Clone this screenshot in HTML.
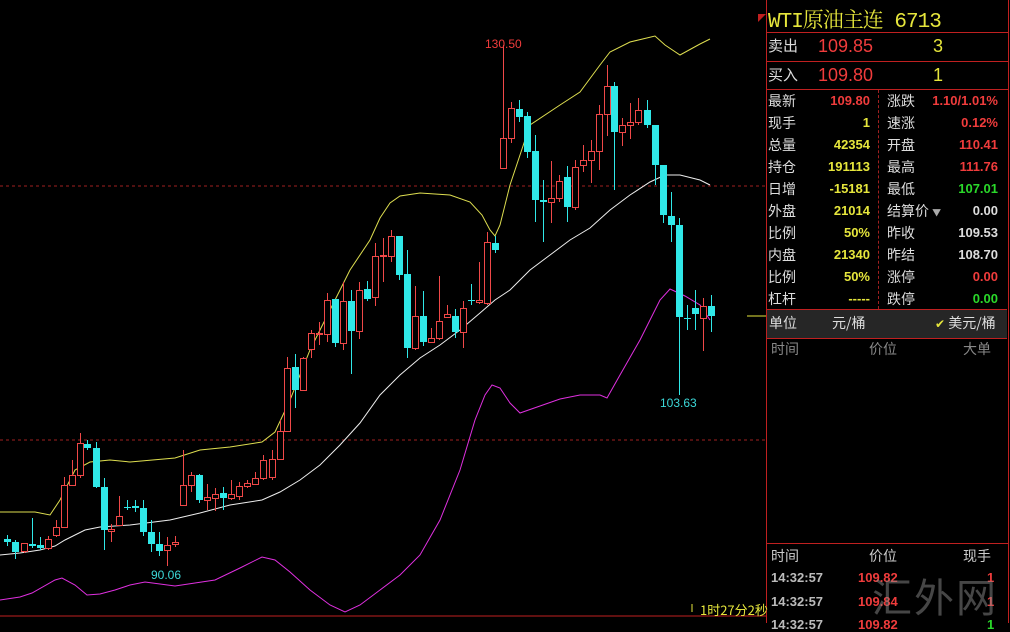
<!DOCTYPE html>
<html><head><meta charset="utf-8"><style>
body{margin:0;background:#000;width:1010px;height:623px;overflow:hidden;position:relative;font-family:"Liberation Sans","Noto Sans CJK SC",sans-serif}
.a{position:absolute;white-space:nowrap}
.cn{font-family:"Noto Sans CJK SC",sans-serif}
.w{color:#ddd}.r{color:#f03c3c}.y{color:#e6e63c}.g{color:#2ad82a}.gr{color:#888}
.s{font-size:13px;font-weight:bold}
</style></head><body>
<svg id="c" width="766" height="623" style="position:absolute;left:0;top:0">
<line x1="0" y1="186" x2="766" y2="186" stroke="#a02020" stroke-dasharray="3,3"/>
<line x1="0" y1="440" x2="766" y2="440" stroke="#a02020" stroke-dasharray="3,3"/>
<line x1="0" y1="616" x2="766" y2="616" stroke="#c02020"/>
<line x1="747" y1="316" x2="766" y2="316" stroke="#e6e63c"/>
<line x1="692" y1="604" x2="692" y2="612" stroke="#e6e63c"/>
</svg>
<div class="a" style="left:766px;top:0;width:241px;height:623px;border-left:1px solid #c02020;border-right:1px solid #c02020"></div>
<div class="a" style="left:758px;top:14px;width:0;height:0;border-left:8px solid #c02020;border-bottom:8px solid transparent"></div>
<div class="a y" style="left:768px;top:4px;font-size:21px;font-family:'Liberation Mono','Noto Serif CJK SC',monospace;letter-spacing:-1px">WTI原油主连 6713</div>
<div class="a" style="left:766px;top:32px;width:242px;border-top:1px solid #c02020"></div>
<div class="a" style="left:766px;top:61px;width:242px;border-top:1px solid #c02020"></div>
<div class="a" style="left:766px;top:89px;width:242px;border-top:1px solid #c02020"></div>
<div class="a w cn" style="left:768px;top:35px;font-size:15px">卖出</div>
<div class="a r" style="left:818px;top:36px;font-size:18px">109.85</div>
<div class="a y" style="left:933px;top:36px;font-size:18px">3</div>
<div class="a w cn" style="left:768px;top:64px;font-size:15px">买入</div>
<div class="a r" style="left:818px;top:65px;font-size:18px">109.80</div>
<div class="a y" style="left:933px;top:65px;font-size:18px">1</div>
<div class="a" style="left:878px;top:90px;height:219px;border-left:1px dashed #a02020"></div>
<div id="st"></div>
<div class="a" style="left:767px;top:309px;width:240px;height:28px;background:#262626;border-top:1px solid #c02020;border-bottom:1px solid #c02020"></div>
<div class="a w cn" style="left:769px;top:313px;font-size:14px">单位</div>
<div class="a w cn" style="left:832px;top:313px;font-size:14px">元/桶</div>
<div class="a w cn" style="left:935px;top:313px;font-size:14px"><span class="y" style="font-size:12px">✔</span> 美元/桶</div>
<div class="a gr cn" style="left:771px;top:339px;font-size:14px">时间</div>
<div class="a gr cn" style="left:869px;top:339px;font-size:14px">价位</div>
<div class="a gr cn" style="left:963px;top:339px;font-size:14px">大单</div>
<div class="a" style="left:766px;top:543px;width:242px;border-top:1px solid #c02020"></div>
<div class="a w cn" style="left:771px;top:546px;font-size:14px;color:#ccc">时间</div>
<div class="a w cn" style="left:869px;top:546px;font-size:14px;color:#ccc">价位</div>
<div class="a w cn" style="left:963px;top:546px;font-size:14px;color:#ccc">现手</div>
<div class="a s" style="left:771px;top:570px;color:#bbb">14:32:57</div><div class="a s r" style="left:858px;top:570px">109.82</div><div class="a s r" style="left:987px;top:570px">1</div>
<div class="a s" style="left:771px;top:594px;color:#bbb">14:32:57</div><div class="a s r" style="left:858px;top:594px">109.84</div><div class="a s r" style="left:987px;top:594px">1</div>
<div class="a s" style="left:771px;top:617px;color:#bbb">14:32:57</div><div class="a s r" style="left:858px;top:617px">109.82</div><div class="a s g" style="left:987px;top:617px">1</div>
<div class="a cn" style="left:872px;top:566px;font-size:40px;color:rgba(140,140,140,0.5);letter-spacing:2px">汇外网</div>
<div class="a y cn" style="left:700px;top:600px;font-size:13px">1时27分2秒</div>
<div class="a r" style="left:485px;top:37px;font-size:12px">130.50</div>
<div class="a" style="left:660px;top:396px;font-size:12px;color:#3cd8d8">103.63</div>
<div class="a" style="left:151px;top:568px;font-size:12px;color:#3cd8d8">90.06</div>
<script>
var st=[["最新","109.80","r","涨跌","1.10/1.01%","r"],["现手","1","y","速涨","0.12%","r"],["总量","42354","y","开盘","110.41","r"],["持仓","191113","y","最高","111.76","r"],["日增","-15181","y","最低","107.01","g"],["外盘","21014","y","结算价","0.00","w"],["比例","50%","y","昨收","109.53","w"],["内盘","21340","y","昨结","108.70","w"],["比例","50%","y","涨停","0.00","r"],["杠杆","-----","y","跌停","0.00","g"]];
var h="";st.forEach(function(r,i){var t=91+i*22;h+='<div class="a w cn" style="left:768px;top:'+t+'px;font-size:14px">'+r[0]+'</div><div class="a s '+r[2]+'" style="right:140px;top:'+(t+2)+'px">'+r[1]+'</div><div class="a w cn" style="left:887px;top:'+t+'px;font-size:14px">'+r[3]+(i==5?' <span style="font-size:9px;color:#aaa">▼</span>':'')+'</div><div class="a s '+r[5]+'" style="right:12px;top:'+(t+2)+'px">'+r[4]+'</div>'});
document.getElementById("st").innerHTML=h;
var C=[[7,539,542,535,546],[15,542,552,540,559],[24,551,543,543,553],[32,544,546,518,548],[40,545,548,537,550],[48,548,539,536,550],[56,535,527,520,537],[64,527,485,477,528],[72,485,475,460,486],[80,475,443,433,478],[87,444,448,440,450],[96,448,487,442,488],[104,487,530,478,550],[111,531,529,524,542],[119,525,516,496,526],[127,507,508,500,510],[135,506,508,500,512],[143,508,532,500,536],[151,532,544,520,552],[159,544,551,532,556],[167,550,545,537,566],[175,544,542,536,547],[183,505,485,450,506],[191,485,475,472,492],[199,475,500,474,503],[207,500,497,484,510],[215,498,494,488,511],[223,493,498,487,510],[231,498,494,480,500],[239,496,486,482,500],[247,486,483,480,488],[255,484,478,472,485],[263,478,460,455,480],[272,477,459,450,480],[280,459,431,420,460],[287,431,368,357,432],[295,367,390,354,408],[303,390,358,357,391],[311,349,333,330,358],[319,334,333,322,345],[327,334,300,293,342],[335,299,343,300,347],[343,343,301,282,350],[351,301,331,290,374],[359,331,290,282,339],[367,289,299,281,301],[375,297,256,243,306],[383,256,255,238,282],[391,256,236,230,262],[399,236,275,236,280],[407,274,348,250,358],[415,348,316,286,350],[423,316,342,291,346],[431,342,338,328,343],[439,338,321,276,340],[447,317,314,305,318],[455,316,332,309,338],[463,332,308,301,348],[471,300,301,284,305],[479,302,300,262,304],[487,303,242,232,305],[495,243,250,236,253],[503,168,138,45,168],[511,138,108,102,143],[519,109,117,100,122],[527,116,152,112,158],[535,151,200,135,222],[543,200,202,180,242],[551,202,198,161,223],[559,198,181,175,202],[567,177,207,166,222],[575,207,167,160,210],[583,165,160,145,172],[591,160,151,140,183],[599,151,114,105,170],[607,114,86,65,136],[614,86,132,82,190],[622,132,125,118,146],[630,125,122,103,139],[638,122,110,98,125],[647,110,125,100,128],[655,125,165,125,185],[663,165,215,165,223],[671,216,225,192,242],[679,225,317,218,395],[687,318,319,305,330],[695,308,314,290,330],[703,318,306,298,351],[711,306,316,295,332]];
var s='';
function P(a,c){return '<polyline fill="none" stroke="'+c+'" stroke-width="1" points="'+a.map(function(p){return p.join(',')}).join(' ')+'"/>'}
s+=P([[0,512],[35,512],[50,515],[60,500],[75,470],[90,462],[110,460],[130,462],[175,458],[200,450],[230,447],[262,442],[275,432],[290,400],[310,350],[330,310],[350,270],[370,240],[380,218],[390,203],[400,196],[420,193],[450,195],[470,202],[482,215],[490,230],[495,236],[500,225],[510,185],[520,155],[530,125],[560,105],[580,92],[600,65],[610,52],[630,42],[655,36],[665,45],[680,55],[700,44],[710,39]],"#dede50");
s+=P([[0,555],[20,553],[40,550],[55,546],[65,540],[85,530],[100,527],[130,525],[170,520],[200,513],[230,505],[262,500],[280,492],[300,480],[320,465],[340,445],[360,423],[380,395],[400,375],[420,358],[440,345],[460,330],[480,313],[495,300],[510,290],[530,270],[550,255],[570,240],[590,228],[610,210],[630,195],[650,182],[665,175],[680,175],[700,180],[710,185]],"#eee");
s+=P([[0,600],[20,597],[32,593],[55,580],[62,578],[75,585],[87,595],[100,594],[115,590],[130,585],[145,582],[175,586],[195,583],[215,580],[240,568],[262,557],[275,560],[290,572],[310,590],[330,605],[345,612],[360,605],[380,590],[400,575],[420,555],[440,520],[460,470],[475,420],[485,395],[492,385],[500,388],[510,403],[520,413],[540,406],[560,399],[580,395],[600,395],[607,398],[620,375],[640,340],[660,300],[670,289],[685,296],[700,305],[710,320]],"#e030e0");
C.forEach(function(k){var x=k[0],o=k[1],c=k[2],up=c<o,col=up?"#f04848":"#30e8e8";var t=Math.min(o,c),b=Math.max(o,c);if(b-t<1)b=t+1;
s+='<line x1="'+(x+.5)+'" y1="'+k[3]+'" x2="'+(x+.5)+'" y2="'+k[4]+'" stroke="'+col+'"/>';
if(up)s+='<rect x="'+(x-2.5)+'" y="'+(t+.5)+'" width="6" height="'+(b-t)+'" fill="#000" stroke="'+col+'"/>';
else s+='<rect x="'+(x-3)+'" y="'+t+'" width="7" height="'+(b-t)+'" fill="'+col+'"/>';});
document.getElementById("c").insertAdjacentHTML("beforeend",s);
</script>
</body></html>
